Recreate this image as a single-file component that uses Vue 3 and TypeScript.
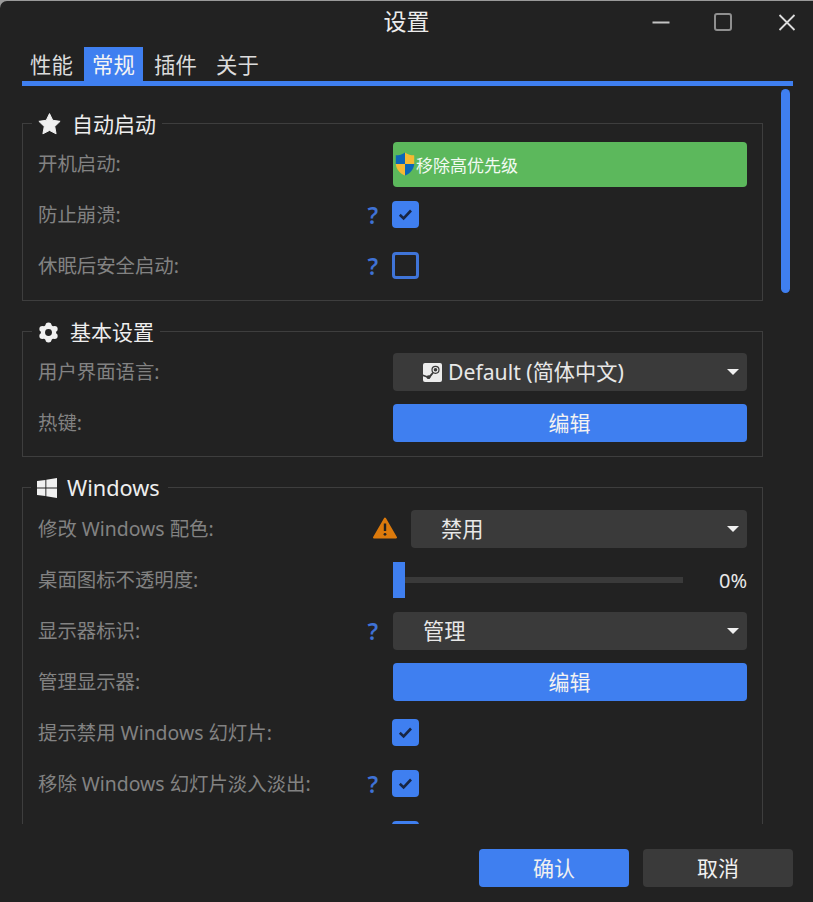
<script setup lang="ts">
const tabs: { label: string; active?: boolean }[] = [
  { label: '性能' },
  { label: '常规', active: true },
  { label: '插件' },
  { label: '关于' },
]
</script>

<template>
  <div class="window">
    <header class="titlebar">
      <span></span>
      <h1 class="title">设置</h1>
      <div class="controls">
        <svg width="18" height="18" viewBox="0 0 18 18"><path d="M0.500 9.500H17.500" stroke="#c4c4c4" stroke-width="2" /></svg>
        <svg class="max" width="18" height="18" viewBox="0 0 18 18"><rect x="1" y="1" width="16" height="16" rx="2" fill="none" stroke="#8f8f8f" stroke-width="2" /></svg>
        <svg width="18" height="18" viewBox="0 0 18 18"><path d="M1.500 2L16.500 17M16.500 2L1.500 17" stroke="#dcdcdc" stroke-width="1.800" /></svg>
      </div>
    </header>

    <nav class="tabs">
      <button v-for="tab in tabs" :key="tab.label" class="tab" :class="{ active: tab.active }">{{ tab.label }}</button>
    </nav>

    <main class="scroll">
      <section class="group group-start">
        <div class="legend">
          <svg width="23" height="22" viewBox="0 0 24 23"><path d="M12 .6l3.400 7 7.700 1.100-5.600 5.400 1.400 7.700L12 18.200l-6.900 3.600 1.400-7.700L.9 8.700l7.700-1.100z" fill="#f0f0f0" stroke="#f0f0f0" stroke-width="1" stroke-linejoin="round" /></svg>
          <span class="legend-text">自动启动</span>
        </div>
        <div class="row">
          <label class="label">开机启动:</label>
          <div class="control">
            <button class="btn-green">
              <svg width="20" height="24" viewBox="0 0 20 24">
                <path d="M10 0.500C7.500 2.500 4 3.300 0.800 3.300V12H10z" fill="#0d66b8" />
                <path d="M10 0.500C12.500 2.500 16 3.300 19.200 3.300V12H10z" fill="#f7b933" />
                <path d="M0.800 12C1.200 17.500 5 21.500 10 23.500V12z" fill="#f7b933" />
                <path d="M19.200 12C18.800 17.500 15 21.500 10 23.500V12z" fill="#0d66b8" />
              </svg>
              <span>移除高优先级</span>
            </button>
          </div>
        </div>
        <div class="row">
          <label class="label">防止崩溃:</label>
          <span class="help">?</span>
          <div class="control"><span class="check on"><svg width="15" height="13" viewBox="0 0 15 13"><path d="M1.800 6.800L5.600 10.500L13 2.500" fill="none" stroke="#182644" stroke-width="2.600" /></svg></span></div>
        </div>
        <div class="row">
          <label class="label">休眠后安全启动:</label>
          <span class="help">?</span>
          <div class="control"><span class="check"></span></div>
        </div>
      </section>

      <section class="group">
        <div class="legend">
          <svg width="21" height="21" viewBox="0 0 22 22">
            <g fill="#f0f0f0">
              <circle cx="11" cy="11" r="8" />
              <circle cx="11" cy="3.600" r="3.200" />
              <circle cx="11" cy="18.400" r="3.200" />
              <circle cx="4.600" cy="7.300" r="3.200" />
              <circle cx="17.400" cy="7.300" r="3.200" />
              <circle cx="4.600" cy="14.700" r="3.200" />
              <circle cx="17.400" cy="14.700" r="3.200" />
            </g>
            <circle cx="11" cy="11" r="3.600" fill="#222222" />
          </svg>
          <span class="legend-text">基本设置</span>
        </div>
        <div class="row">
          <label class="label">用户界面语言:</label>
          <div class="control">
            <div class="combo">
              <svg width="19" height="19" viewBox="0 0 19 19">
                <rect width="19" height="19" rx="2" fill="#ececec" />
                <circle cx="12.500" cy="6.800" r="3.500" fill="none" stroke="#3a3a3a" stroke-width="1.200" />
                <circle cx="12.500" cy="6.800" r="1.800" fill="#3a3a3a" />
                <path d="M0 11.500L5.500 13.500L9.500 9L10.500 10.500L6.500 15.500L0 13.200z" fill="#3a3a3a" />
                <circle cx="5.500" cy="14.200" r="1.900" fill="#3a3a3a" />
              </svg>
              <span class="combo-text">Default (简体中文)</span>
              <i class="caret"></i>
            </div>
          </div>
        </div>
        <div class="row">
          <label class="label">热键:</label>
          <div class="control"><button class="btn-blue">编辑</button></div>
        </div>
      </section>

      <section class="group group-win">
        <div class="legend legend-win">
          <svg width="20" height="20" viewBox="0 0 21 21"><path d="M0 3.200L8.800 2V10H0zM9.800 1.800L21 0V10H9.800zM0 11H8.800V19L0 17.800zM9.800 11H21V21L9.800 19.200z" fill="#f0f0f0" /></svg>
          <span class="legend-text">Windows</span>
        </div>
        <div class="row">
          <label class="label">修改 Windows 配色:</label>
          <svg class="warn" width="24" height="22" viewBox="0 0 24 22">
            <path d="M12 1.500L23 20.500H1z" fill="#dc7a0c" stroke="#dc7a0c" stroke-width="2" stroke-linejoin="round" />
            <path d="M12 6.500V14" stroke="#222222" stroke-width="2.400" />
            <circle cx="12" cy="17.300" r="1.400" fill="#222222" />
          </svg>
          <div class="combo combo-narrow">
            <span class="combo-text">禁用</span>
            <i class="caret"></i>
          </div>
        </div>
        <div class="row">
          <label class="label">桌面图标不透明度:</label>
          <div class="control slider">
            <i class="thumb"></i>
            <i class="track"></i>
            <span class="pct">0%</span>
          </div>
        </div>
        <div class="row">
          <label class="label">显示器标识:</label>
          <span class="help">?</span>
          <div class="control">
            <div class="combo">
              <span class="combo-text">管理</span>
              <i class="caret"></i>
            </div>
          </div>
        </div>
        <div class="row">
          <label class="label">管理显示器:</label>
          <div class="control"><button class="btn-blue">编辑</button></div>
        </div>
        <div class="row">
          <label class="label">提示禁用 Windows 幻灯片:</label>
          <div class="control"><span class="check on"><svg width="15" height="13" viewBox="0 0 15 13"><path d="M1.800 6.800L5.600 10.500L13 2.500" fill="none" stroke="#182644" stroke-width="2.600" /></svg></span></div>
        </div>
        <div class="row">
          <label class="label">移除 Windows 幻灯片淡入淡出:</label>
          <span class="help">?</span>
          <div class="control"><span class="check on"><svg width="15" height="13" viewBox="0 0 15 13"><path d="M1.800 6.800L5.600 10.500L13 2.500" fill="none" stroke="#182644" stroke-width="2.600" /></svg></span></div>
        </div>
        <div class="row">
          <div class="label"></div>
          <div class="control"><span class="check on"></span></div>
        </div>
      </section>

      <div class="scrollbar"></div>
    </main>

    <footer class="footer">
      <button class="action primary">确认</button>
      <button class="action">取消</button>
    </footer>
  </div>
</template>

<style>
html,
body {
  margin: 0;
  background: #9a9a9a;
}
</style>

<style scoped>
* {
  box-sizing: border-box;
}

.window {
  width: 813px;
  height: 901px;
  margin-top: 1px;
  display: flex;
  flex-direction: column;
  overflow: hidden;
  background: #222222;
  border-radius: 7px 0 0 0;
  color: #e8e8e8;
  font-family: "Noto Sans", "Noto Sans CJK SC", sans-serif;
}

.titlebar {
  flex: none;
  height: 46px;
  padding-bottom: 4px;
  display: grid;
  grid-template-columns: 1fr auto 1fr;
  align-items: center;
}

.title {
  margin: 0 0 3px;
  font-size: 23px;
  font-weight: 400;
  line-height: 38px;
  color: #ececec;
}

.controls {
  display: flex;
  justify-content: flex-end;
  gap: 45px;
  padding-right: 17px;
}

.max {
  margin: 0 1px 0 -1px;
}

.tabs {
  flex: none;
  height: 39px;
  margin: 0 20px 0 22px;
  display: flex;
  gap: 3px;
  border-bottom: 5px solid #3f7ff0;
}

.tab {
  width: 59px;
  height: 34px;
  margin: 0;
  padding: 0 0 0 8px;
  border: 0;
  background: transparent;
  color: #dcdcdc;
  font: inherit;
  font-size: 21.400px;
  line-height: 36px;
  text-align: left;
}

.tab.active {
  background: #3f7ff0;
  color: #f4f4f4;
}

.scroll {
  position: relative;
  flex: none;
  height: 738px;
  overflow: hidden;
  padding: 37px 0 0 22px;
}

.group {
  position: relative;
  width: 741px;
  margin-bottom: 30px;
  padding: 21px 15px 14px;
  border: 1px solid #3e3e3e;
  display: flex;
  flex-direction: column;
  gap: 13px;
}

.group-start {
  padding-bottom: 15px;
}

.group-win {
  padding-top: 22px;
}

.legend {
  position: absolute;
  top: -15px;
  left: 9px;
  height: 30px;
  padding: 0 6px;
  display: flex;
  align-items: center;
  gap: 11px;
  background: #222222;
}

.legend-win {
  left: 8px;
  padding-right: 8px;
  gap: 10px;
}

.legend-text {
  padding-bottom: 2px;
  font-size: 21px;
  color: #eeeeee;
}

.legend-win .legend-text {
  font-size: 21.700px;
}

.row {
  height: 38px;
  display: flex;
  align-items: center;
}

.label {
  flex: 1;
  padding-bottom: 4px;
  font-size: 19.400px;
  color: #828282;
  white-space: nowrap;
}

.help {
  margin-right: 15px;
  padding-bottom: 1px;
  font-size: 23px;
  font-weight: 600;
  color: #3f72d6;
}

.control {
  flex: none;
  width: 354px;
  display: flex;
  align-items: center;
}

.btn-green {
  width: 354px;
  height: 45px;
  padding: 0 0 0 2px;
  display: flex;
  align-items: center;
  gap: 1px;
  border: 0;
  border-radius: 4px;
  background: #5cb85c;
  color: #f2faf2;
  font: inherit;
  font-size: 17px;
}

.btn-blue {
  width: 354px;
  height: 38px;
  padding: 0 1px 3px 0;
  border: 0;
  border-radius: 4px;
  background: #3f7ff0;
  color: #f2f2f2;
  font: inherit;
  font-size: 21px;
}

.check {
  width: 27px;
  height: 27px;
  margin: 0 0 2px -1px;
  display: flex;
  align-items: center;
  justify-content: center;
  border: 3px solid #3f74d8;
  border-radius: 4px;
}

.check.on {
  border-color: #3f7ff0;
  background: #3f7ff0;
}

.combo {
  position: relative;
  width: 354px;
  height: 38px;
  padding-left: 30px;
  display: flex;
  align-items: center;
  gap: 6px;
  border-radius: 4px;
  background: #3a3a3a;
}

.combo-narrow {
  flex: none;
  width: 336px;
}

.combo-text {
  padding-bottom: 3px;
  font-size: 21.200px;
  color: #e8e8e8;
}

.caret {
  position: absolute;
  top: 16px;
  right: 8px;
  width: 0;
  height: 0;
  border-left: 6px solid transparent;
  border-right: 6px solid transparent;
  border-top: 6px solid #f0f0f0;
}

.warn {
  flex: none;
  margin: 0 14px 2px 0;
}

.slider {
  height: 36px;
}

.thumb {
  flex: none;
  width: 12px;
  height: 36px;
  background: #3f7ff0;
}

.track {
  flex: none;
  width: 278px;
  height: 6px;
  background: #3a3a3a;
}

.pct {
  flex: 1;
  text-align: right;
  font-size: 20px;
  color: #e8e8e8;
}

.scrollbar {
  position: absolute;
  top: 3px;
  left: 781px;
  width: 9px;
  height: 204px;
  border-radius: 5px;
  background: #3f7ff0;
}

.footer {
  flex: 1;
  padding: 25px 20px 0 0;
  display: flex;
  justify-content: flex-end;
  gap: 14px;
}

.action {
  width: 150px;
  height: 38px;
  padding: 0 0 2px;
  border: 0;
  border-radius: 4px;
  background: #3a3a3a;
  color: #f0f0f0;
  font: inherit;
  font-size: 21px;
}

.action.primary {
  background: #3f7ff0;
}
</style>
